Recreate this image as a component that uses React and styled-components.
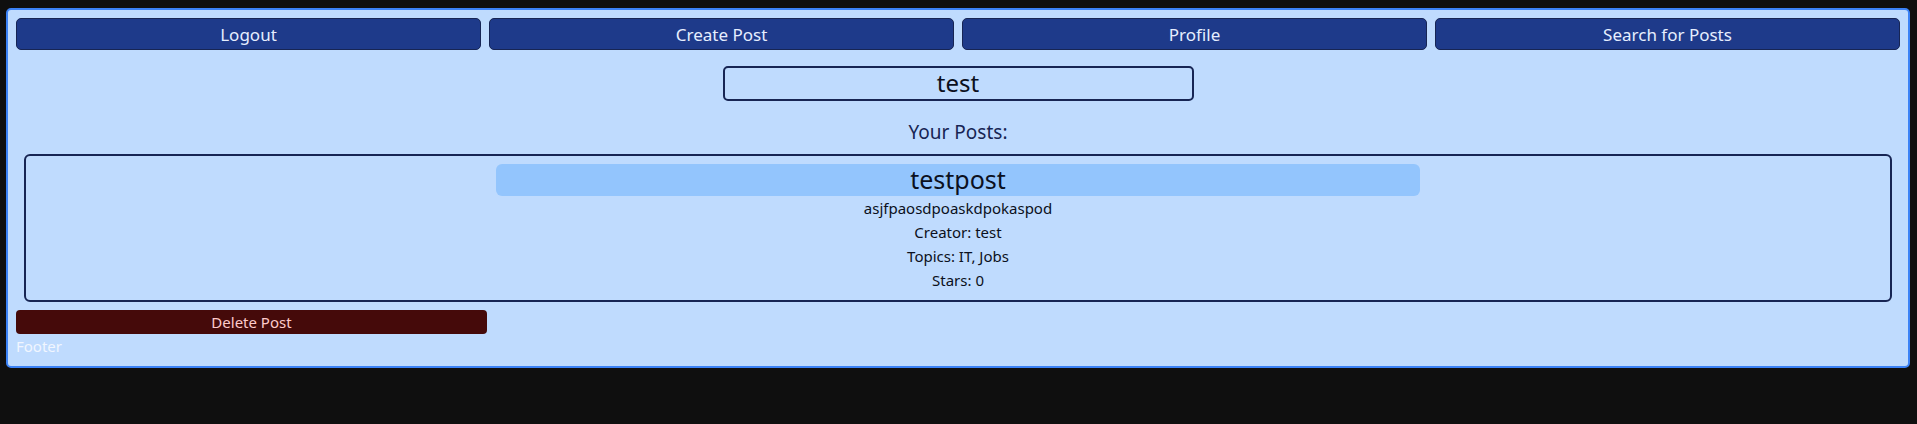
import React from "react";
import styled, { createGlobalStyle } from "styled-components";

const GlobalStyle = createGlobalStyle`
  html, body {
    margin: 0;
    padding: 0;
    background: #0f0f0f;
    font-family: "Noto Sans", "Open Sans", sans-serif;
  }
  * { box-sizing: border-box; }
`;

const Page = styled.div`
  margin: 8px 7px 0 6px;
  padding: 8px;
  background: #bfdbfe;
  border: 2px solid #3b82f6;
  border-radius: 5px;
  display: flex;
  flex-direction: column;
`;

const NavBar = styled.nav`
  display: grid;
  grid-template-columns: repeat(4, 1fr);
  gap: 8px;
`;

const NavButton = styled.button`
  height: 32px;
  background: #1e3a8a;
  border: 1.5px solid #172554;
  border-radius: 5px;
  color: #e6eeff;
  font-family: inherit;
  font-size: 17px;
  padding: 0;
`;

const UserName = styled.div`
  align-self: center;
  width: 25%;
  height: 35px;
  margin-top: 16px;
  border: 2px solid #172554;
  border-radius: 5px;
  font-size: 24px;
  line-height: 30px;
  text-align: center;
  color: #0b1020;
`;

const Heading = styled.h2`
  margin: 17px 0 8px;
  font-size: 19px;
  font-weight: 400;
  line-height: 28px;
  text-align: center;
  color: #172554;
`;

const PostCard = styled.div`
  margin: 0 8px;
  padding: 8px;
  border: 2px solid #172554;
  border-radius: 6px;
  display: flex;
  flex-direction: column;
  align-items: center;
`;

const PostTitle = styled.div`
  width: 50%;
  height: 32px;
  background: #93c5fd;
  border-radius: 6px;
  font-size: 25px;
  line-height: 31px;
  text-align: center;
  color: #0b1020;
`;

const PostLine = styled.div`
  font-size: 15px;
  line-height: 24px;
  color: #0b1020;
`;

const DeleteButton = styled.button`
  width: 25%;
  height: 24px;
  margin-top: 8px;
  background: #450a0a;
  border: none;
  border-radius: 4px;
  color: #fecaca;
  font-family: inherit;
  font-size: 15px;
  padding: 0;
`;

const Footer = styled.footer`
  font-size: 15px;
  line-height: 24px;
  color: #f1f6ff;
`;

export default function App() {
  const post = {
    title: "testpost",
    body: "asjfpaosdpoaskdpokaspod",
    creator: "test",
    topics: ["IT", "Jobs"],
    stars: 0,
  };

  return (
    <>
      <GlobalStyle />
      <Page>
        <NavBar>
          <NavButton>Logout</NavButton>
          <NavButton>Create Post</NavButton>
          <NavButton>Profile</NavButton>
          <NavButton>Search for Posts</NavButton>
        </NavBar>
        <UserName>test</UserName>
        <Heading>Your Posts:</Heading>
        <PostCard>
          <PostTitle>{post.title}</PostTitle>
          <PostLine>{post.body}</PostLine>
          <PostLine>Creator: {post.creator}</PostLine>
          <PostLine>Topics: {post.topics.join(", ")}</PostLine>
          <PostLine>Stars: {post.stars}</PostLine>
        </PostCard>
        <DeleteButton>Delete Post</DeleteButton>
        <Footer>Footer</Footer>
      </Page>
    </>
  );
}
